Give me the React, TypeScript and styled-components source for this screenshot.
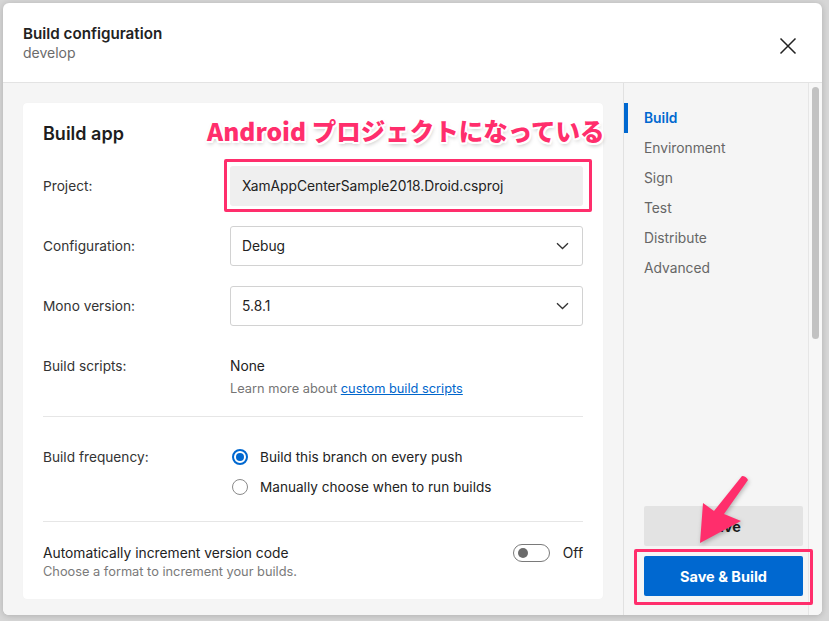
import React from "react";
import styled, { createGlobalStyle } from "styled-components";

const Global = createGlobalStyle`
  html, body { margin: 0; padding: 0; }
  body {
    background: #d6d6d6;
    font-family: Inter, "Noto Sans", "Liberation Sans", sans-serif;
    color: #222;
    width: 829px;
    height: 621px;
    overflow: hidden;
  }
`;

const Page = styled.div`
  position: relative;
  width: 829px;
  height: 621px;
  padding: 3px 7px 6px 3px;
  box-sizing: border-box;
`;

const Modal = styled.div`
  width: 819px;
  height: 612px;
  background: #fff;
  border-radius: 6px;
  box-shadow: 0 1px 6px rgba(0, 0, 0, 0.18);
  display: flex;
  flex-direction: column;
  overflow: hidden;
`;

const Header = styled.div`
  height: 80px;
  flex-shrink: 0;
  box-sizing: border-box;
  padding: 21px 24px 0 20px;
  border-bottom: 1px solid #e3e3e3;
  display: flex;
  justify-content: space-between;
  align-items: flex-start;
`;

const HeaderText = styled.div`
  display: flex;
  flex-direction: column;
`;

const Title = styled.div`
  font-size: 15.2px;
  font-weight: 600;
  line-height: 19px;
  color: #222;
`;

const Subtitle = styled.div`
  font-size: 14px;
  line-height: 20px;
  color: #6b6b6b;
`;

const CloseButton = styled.button`
  border: none;
  background: none;
  padding: 0;
  margin-top: 12px;
  width: 20px;
  height: 20px;
  display: flex;
  align-items: center;
  justify-content: center;
  cursor: pointer;
`;

const Body = styled.div`
  flex: 1;
  display: grid;
  grid-template-columns: 620px 185px 14px;
  background: #f5f5f5;
  min-height: 0;
`;

const Main = styled.div`
  padding: 20px 20px 17px 20px;
`;

const Card = styled.div`
  position: relative;
  background: #fff;
  border-radius: 4px;
  padding: 20px 20px 0 20px;
  box-shadow: 0 0 1px rgba(0, 0, 0, 0.05);
  height: 100%;
  box-sizing: border-box;
`;

const CardTitle = styled.h2`
  margin: 0 0 21px 0;
  font-size: 18px;
  font-weight: 600;
  line-height: 22px;
  color: #1d1d1d;
`;

const FieldRow = styled.div`
  display: grid;
  grid-template-columns: 187px 353px;
  align-items: center;
  min-height: 40px;
  margin-bottom: 20px;
`;

const Label = styled.div<{ $lh?: number }>`
  font-size: 13.7px;
  line-height: ${(p) => p.$lh ?? 20}px;
  color: #333;
  align-self: ${(p) => (p.$lh ? "start" : "center")};
`;

const FieldBox = styled.div`
  position: relative;
`;

const ReadOnlyInput = styled.div`
  height: 40px;
  box-sizing: border-box;
  background: #efefef;
  border-radius: 3px;
  padding: 0 12px;
  display: flex;
  align-items: center;
  font-size: 13.8px;
  color: #222;
`;

const Select = styled.div`
  height: 40px;
  box-sizing: border-box;
  background: #fff;
  border: 1px solid #d2d2d2;
  border-radius: 3px;
  padding: 0 13px 0 11px;
  display: flex;
  align-items: center;
  justify-content: space-between;
  font-size: 13.8px;
  color: #222;
`;

const ScriptsRow = styled.div`
  display: grid;
  grid-template-columns: 187px 353px;
  padding: 10px 0 18px 0;
  border-bottom: 1px solid #e6e6e6;
`;

const ValueCol = styled.div`
  display: flex;
  flex-direction: column;
`;

const ValueText = styled.div`
  font-size: 13.8px;
  line-height: 20px;
  color: #222;
`;

const HelpText = styled.div`
  margin-top: 4px;
  font-size: 12.8px;
  line-height: 18px;
  color: #757575;
`;

const Link = styled.a`
  color: #0066cc;
  text-decoration: underline;
`;

const FrequencyRow = styled.div`
  display: grid;
  grid-template-columns: 187px 353px;
  padding: 25px 0 19px 0;
  border-bottom: 1px solid #e6e6e6;
`;

const RadioList = styled.div`
  display: flex;
  flex-direction: column;
`;

const RadioOption = styled.label`
  display: flex;
  align-items: center;
  height: 30px;
  padding-left: 2px;
  gap: 12px;
  font-size: 13.6px;
  color: #222;
`;

const RadioDot = styled.span<{ $checked?: boolean }>`
  width: 16px;
  height: 16px;
  box-sizing: border-box;
  border-radius: 50%;
  border: ${(p) => (p.$checked ? "2px solid #0068d0" : "1px solid #8a8a8a")};
  background: #fff;
  display: flex;
  align-items: center;
  justify-content: center;
  &::after {
    content: "";
    display: ${(p) => (p.$checked ? "block" : "none")};
    width: 8px;
    height: 8px;
    border-radius: 50%;
    background: #0068d0;
  }
`;

const AutoRow = styled.div`
  display: flex;
  justify-content: space-between;
  align-items: flex-start;
  padding: 21px 0 18px 0;
`;

const AutoTitle = styled.div`
  font-size: 13.8px;
  line-height: 20px;
  color: #222;
`;

const AutoSub = styled.div`
  font-size: 12.8px;
  line-height: 18px;
  color: #7a7a7a;
`;

const ToggleWrap = styled.div`
  display: flex;
  align-items: center;
  gap: 13px;
  height: 20px;
  font-size: 13.8px;
  color: #222;
`;

const ToggleTrack = styled.span`
  width: 37px;
  height: 18px;
  box-sizing: border-box;
  border: 1px solid #7a7a7a;
  border-radius: 9px;
  display: flex;
  align-items: center;
  padding-left: 4px;
  &::after {
    content: "";
    width: 10px;
    height: 10px;
    border-radius: 50%;
    background: #6b6b6b;
  }
`;

const Highlight = styled.div`
  position: absolute;
  border: 3px solid #ff2e6c;
  border-radius: 2px;
  pointer-events: none;
`;

const Annotation = styled.div`
  position: absolute;
  left: 184px;
  top: 12px;
  white-space: nowrap;
  font-family: "Noto Sans CJK JP", "Noto Sans", sans-serif;
  font-weight: 900;
  font-size: 24.5px;
  line-height: 32px;
  color: #ff2e6c;
  text-shadow:
    -2px 0 0 #fff, 2px 0 0 #fff, 0 -2px 0 #fff, 0 2px 0 #fff,
    -1.5px -1.5px 0 #fff, 1.5px -1.5px 0 #fff, -1.5px 1.5px 0 #fff, 1.5px 1.5px 0 #fff,
    1px 3px 4px rgba(0, 0, 0, 0.25);
`;

const Sidebar = styled.div`
  position: relative;
  border-left: 1px solid #e1e1e1;
  display: flex;
  flex-direction: column;
  justify-content: space-between;
  padding: 20px 0 20px 0;
  box-sizing: border-box;
`;

const Nav = styled.nav`
  display: flex;
  flex-direction: column;
`;

const NavItem = styled.a<{ $active?: boolean }>`
  display: block;
  height: 30px;
  line-height: 30px;
  padding-left: 16px;
  font-size: 13.8px;
  font-weight: ${(p) => (p.$active ? 600 : 400)};
  color: ${(p) => (p.$active ? "#0068d0" : "#666")};
  border-left: 4px solid ${(p) => (p.$active ? "#0068d0" : "transparent")};
  box-sizing: border-box;
`;

const ActionStack = styled.div`
  position: relative;
  display: flex;
  flex-direction: column;
  gap: 10px;
  padding-left: 20px;
`;

const Button = styled.button<{ $primary?: boolean }>`
  width: 159px;
  height: 40px;
  border: none;
  border-radius: 2px;
  font-family: Inter, "Noto Sans", sans-serif;
  font-size: 14.5px;
  font-weight: 700;
  background: ${(p) => (p.$primary ? "#0068d0" : "#e3e3e3")};
  color: ${(p) => (p.$primary ? "#fff" : "#1d1d1d")};
  cursor: pointer;
`;

const ScrollTrack = styled.div`
  border-left: 1px solid #e6e6e6;
  background: #f7f7f7;
  padding: 4px 3px 0 3px;
`;

const ScrollThumb = styled.div`
  width: 7px;
  height: 252px;
  border-radius: 4px;
  background: #c2c2c2;
`;

const ArrowSvg = styled.svg`
  position: absolute;
  left: 0;
  top: 0;
  pointer-events: none;
  filter: drop-shadow(1px 2px 2px rgba(0, 0, 0, 0.25));
`;

const Chevron = () => (
  <svg width="13" height="8" viewBox="0 0 13 8" fill="none">
    <path d="M1 1.2l5.5 5.3L12 1.2" stroke="#333" strokeWidth="1.3" />
  </svg>
);

export default function App() {
  return (
    <>
      <Global />
      <Page>
        <Modal>
          <Header>
            <HeaderText>
              <Title>Build configuration</Title>
              <Subtitle>develop</Subtitle>
            </HeaderText>
            <CloseButton aria-label="Close">
              <svg width="18" height="18" viewBox="0 0 18 18">
                <path d="M1.5 1.5l15 15M16.5 1.5l-15 15" stroke="#222" strokeWidth="1.5" />
              </svg>
            </CloseButton>
          </Header>
          <Body>
            <Main>
              <Card>
                <CardTitle>Build app</CardTitle>
                <Annotation>Android プロジェクトになっている</Annotation>
                <FieldRow>
                  <Label>Project:</Label>
                  <FieldBox>
                    <ReadOnlyInput>XamAppCenterSample2018.Droid.csproj</ReadOnlyInput>
                    <Highlight style={{ left: -6, right: -9, top: -7, bottom: -6 }} />
                  </FieldBox>
                </FieldRow>
                <FieldRow>
                  <Label>Configuration:</Label>
                  <Select>
                    <span>Debug</span>
                    <Chevron />
                  </Select>
                </FieldRow>
                <FieldRow>
                  <Label>Mono version:</Label>
                  <Select>
                    <span>5.8.1</span>
                    <Chevron />
                  </Select>
                </FieldRow>
                <ScriptsRow>
                  <Label $lh={20}>Build scripts:</Label>
                  <ValueCol>
                    <ValueText>None</ValueText>
                    <HelpText>
                      Learn more about <Link href="#">custom build scripts</Link>
                    </HelpText>
                  </ValueCol>
                </ScriptsRow>
                <FrequencyRow>
                  <Label $lh={30}>Build frequency:</Label>
                  <RadioList>
                    <RadioOption>
                      <RadioDot $checked />
                      Build this branch on every push
                    </RadioOption>
                    <RadioOption>
                      <RadioDot />
                      Manually choose when to run builds
                    </RadioOption>
                  </RadioList>
                </FrequencyRow>
                <AutoRow>
                  <div>
                    <AutoTitle>Automatically increment version code</AutoTitle>
                    <AutoSub>Choose a format to increment your builds.</AutoSub>
                  </div>
                  <ToggleWrap>
                    <ToggleTrack />
                    Off
                  </ToggleWrap>
                </AutoRow>
              </Card>
            </Main>
            <Sidebar>
              <Nav>
                <NavItem $active>Build</NavItem>
                <NavItem>Environment</NavItem>
                <NavItem>Sign</NavItem>
                <NavItem>Test</NavItem>
                <NavItem>Distribute</NavItem>
                <NavItem>Advanced</NavItem>
              </Nav>
              <ActionStack>
                <Button>Save</Button>
                <Button $primary>Save &amp; Build</Button>
                <Highlight style={{ left: 10, top: 43, width: 179, height: 56, boxSizing: "border-box" }} />
              </ActionStack>
            </Sidebar>
            <ScrollTrack>
              <ScrollThumb />
            </ScrollTrack>
          </Body>
        </Modal>
        <ArrowSvg width="829" height="621" viewBox="0 0 829 621">
          <path
            d="M742 476 Q746 476 748 480 L724 514 L741 521 L700 543 L703 503 L714 511 Z"
            fill="#ff2e6c"
          />
        </ArrowSvg>
      </Page>
    </>
  );
}
